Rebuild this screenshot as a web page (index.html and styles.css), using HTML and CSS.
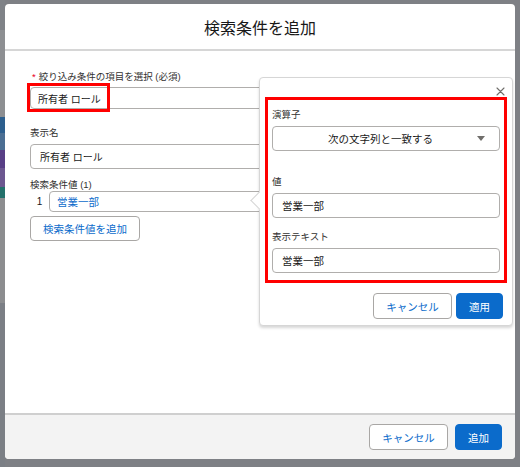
FILE: index.html
```html
<!DOCTYPE html>
<html lang="ja">
<head>
<meta charset="utf-8">
<title>検索条件を追加</title>
<link rel="stylesheet" href="styles.css">
</head>
<body>
<div class="screen">
  <div class="side side-left">
    <div class="strip s1"></div>
    <div class="strip s2"></div>
    <div class="strip s3"></div>
    <div class="strip s4"></div>
    <div class="strip s5"></div>
    <div class="strip s6"></div>
    <div class="strip s7"></div>
    <div class="strip s8"></div>
    <div class="strip s9"></div>
  </div>

  <div class="modal-col">
    <div class="modal">
      <header class="modal-header">
        <h2 class="modal-title">検索条件を追加</h2>
      </header>

      <div class="modal-body">
        <div class="field field-first">
          <label class="label"><abbr class="req">*</abbr>絞り込み条件の項目を選択 (必須)</label>
          <div class="input input-sm">所有者 ロール</div>
          <span class="mark mark-field"></span>
        </div>

        <div class="field field-name">
          <label class="label">表示名</label>
          <div class="input">所有者 ロール</div>
        </div>

        <div class="field field-values">
          <label class="label label-tight">検索条件値 (1)</label>
          <div class="value-row">
            <span class="value-num">1</span>
            <div class="input input-row"><span class="link">営業一部</span></div>
          </div>
          <button class="btn btn-neutral btn-add" type="button">検索条件値を追加</button>
        </div>

        <div class="popover">
          <div class="popover-head">
            <svg class="close-icon" width="9" height="9" viewBox="0 0 9 9" aria-hidden="true">
              <path d="M1 1 L8 8 M8 1 L1 8" stroke="#706e6b" stroke-width="1.1" fill="none" stroke-linecap="round"/>
            </svg>
          </div>
          <div class="pop-section">
            <label class="label">演算子</label>
            <div class="select">
              <span class="select-text">次の文字列と一致する</span>
              <svg class="select-arrow" width="8" height="5" viewBox="0 0 8 5" aria-hidden="true">
                <path d="M0 0 L8 0 L4 5 Z" fill="#706e6b"/>
              </svg>
            </div>
            <label class="label label-val">値</label>
            <div class="input">営業一部</div>
            <label class="label label-disp">表示テキスト</label>
            <div class="input">営業一部</div>
          </div>
          <div class="popover-foot">
            <button class="btn btn-neutral btn-cancel" type="button">キャンセル</button>
            <button class="btn btn-brand btn-apply" type="button">適用</button>
          </div>
        </div>
      </div>

      <footer class="modal-footer">
        <button class="btn btn-neutral btn-cancel btn-foot" type="button">キャンセル</button>
        <button class="btn btn-brand btn-apply btn-foot" type="button">追加</button>
      </footer>
    </div>
  </div>

  <div class="side side-right"></div>
</div>
</body>
</html>
```

FILE: styles.css
```css
* { box-sizing: border-box; }
html, body { margin: 0; padding: 0; }
body {
  font-family: "Liberation Sans", "Noto Sans CJK JP", sans-serif;
  color: #181818;
  background: #7e8085;
}
.screen {
  display: flex;
  width: 520px;
  height: 467px;
  background: #7e8085;
  overflow: hidden;
}
.side { width: 5px; flex: none; display: flex; flex-direction: column; }
.strip { flex: none; width: 100%; }
.s1 { height: 30px; background: #7f8287; }
.s2 { height: 87px; background: #8d8f92; }
.s3 { height: 16px; background: #2d5f8e; }
.s4 { height: 17px; background: #4b6e93; }
.s5 { height: 18px; background: #583f86; }
.s6 { height: 19px; background: #6c5790; }
.s7 { height: 11px; background: #23706b; }
.s8 { height: 105px; background: #8c8d8f; }
.s9 { flex: 1; background: #7b7f85; }
.side-right { background: #7e8085; }

.modal-col { width: 510px; flex: none; padding-top: 4px; }
.modal {
  height: 455px;
  background: #fff;
  border-radius: 4px;
  display: flex;
  flex-direction: column;
}
.modal-header {
  height: 47px;
  flex: none;
  border-bottom: 2px solid #d6d6d6;
  display: flex;
  align-items: center;
  justify-content: center;
}
.modal-title {
  margin: 0;
  font-size: 16px;
  font-weight: 400;
  color: #181818;
}
.modal-body {
  flex: 1;
  position: relative;
  padding: 18px 25px 0;
}
.field { position: relative; }
.field-name { margin-top: 16px; }
.field-values { margin-top: 9px; }

.label {
  display: block;
  font-size: 9.5px;
  line-height: 16px;
  color: #333231;
  margin-bottom: 3px;
}
.field-first .label { margin-bottom: 2px; }
.label-tight { line-height: 13px; margin-bottom: 0; }
.req {
  color: #ea001e;
  text-decoration: none;
  margin: 0 3px 0 2px;
}
.input {
  height: 25px;
  border: 1px solid #b0aeac;
  border-radius: 4px;
  padding: 0 9px;
  display: flex;
  align-items: center;
  font-size: 10.5px;
  color: #181818;
  background: #fff;
}
.input-sm { height: 22px; padding-left: 7px; font-size: 10px; }
.field-name .input { font-size: 10px; }
.mark {
  position: absolute;
  border: 3px solid #ff0000;
  pointer-events: none;
}
.mark-field { left: -3px; top: 14px; width: 83px; height: 29px; }

.value-row { display: flex; align-items: center; height: 21px; }
.value-num {
  width: 19px;
  flex: none;
  text-align: center;
  font-size: 10px;
  color: #181818;
}
.input-row { flex: 1; height: 21px; padding-left: 7px; }
.link { color: #0b6bcb; }

.btn {
  font-family: "Liberation Sans", "Noto Sans CJK JP", sans-serif;
  font-size: 10.5px;
  border-radius: 4px;
  height: 26px;
  padding: 0;
  cursor: pointer;
}
.btn-neutral {
  background: #fff;
  border: 1px solid #a9a7a5;
  color: #0b6bcb;
}
.btn-brand {
  background: #0b6bcb;
  border: 1px solid #0b6bcb;
  color: #fff;
}
.btn-add { margin-top: 4px; height: 25px; width: 110px; display: block; }
.btn-cancel { width: 79px; }
.btn-apply { width: 47px; }

.popover {
  position: absolute;
  left: 254px;
  top: 26px;
  width: 254px;
  background: #fff;
  border: 1px solid #d6d6d6;
  border-radius: 4px;
  box-shadow: 0 2px 3px rgba(0, 0, 0, 0.16);
  padding-bottom: 6px;
}
.popover::before {
  content: "";
  position: absolute;
  left: -7px;
  top: 116px;
  width: 12px;
  height: 12px;
  background: #fff;
  border-left: 1px solid #d6d6d6;
  border-bottom: 1px solid #d6d6d6;
  transform: rotate(45deg);
}
.popover-head {
  height: 19px;
  display: flex;
  justify-content: flex-end;
  align-items: flex-start;
  padding: 9px 7px 0 0;
}
.close-icon { display: block; }
.pop-section {
  position: relative;
  margin: 0 5px;
  border: 3px solid #ff0000;
  padding: 7px 4px 7px;
}
.label-val { margin-top: 23px; }
.label-disp { margin-top: 11px; }
.select {
  height: 25px;
  border: 1px solid #b0aeac;
  border-radius: 4px;
  display: flex;
  align-items: center;
  justify-content: space-between;
  padding: 0 14px 0 55px;
  font-size: 10.5px;
  color: #181818;
}
.select-arrow { display: block; }
.popover-foot {
  display: flex;
  justify-content: flex-end;
  gap: 4px;
  margin-top: 10px;
  padding-right: 9px;
}

.modal-footer {
  height: 46px;
  flex: none;
  border-top: 2px solid #cfcfcf;
  background: #f3f3f3;
  border-radius: 0 0 4px 4px;
  display: flex;
  justify-content: flex-end;
  align-items: center;
  gap: 7px;
  padding: 0 13px;
}
```
